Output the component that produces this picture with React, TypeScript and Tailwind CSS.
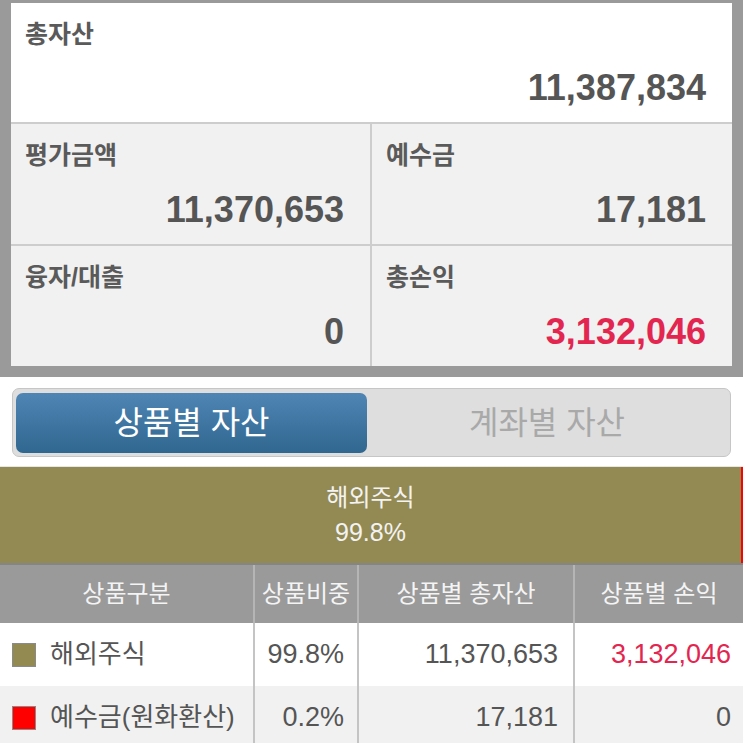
import React from "react";

const FONT = "font-['Liberation_Sans','Noto_Sans_CJK_KR',sans-serif]";

function Cell({
  label,
  value,
  red,
  white,
  border,
  divider,
}: {
  label: string;
  value: string;
  red?: boolean;
  white?: boolean;
  border?: boolean;
  divider?: boolean;
}) {
  return (
    <div
      className={`flex flex-col justify-between pt-[16px] pb-[14px] pl-[14px] pr-[26px] ${
        white ? "bg-white h-[119px]" : "bg-[#f1f1f1] h-[122px]"
      } ${border ? "border-t-2 border-[#cdcdcd]" : ""} ${
        divider ? "border-r-2 border-r-[#cdcdcd]" : ""
      }`}
    >
      <div className="text-[25px] leading-[30px] font-bold text-[#5a5a5a]">{label}</div>
      <div
        className={`text-right text-[36px] leading-[40px] font-bold ${
          red ? "text-[#e3264f]" : "text-[#555555]"
        }`}
      >
        {value}
      </div>
    </div>
  );
}

export default function App() {
  const rows = [
    {
      color: "bg-[#938a52]",
      name: "해외주식",
      ratio: "99.8%",
      total: "11,370,653",
      pl: "3,132,046",
      red: true,
      bg: "bg-white",
    },
    {
      color: "bg-[#ff0000]",
      name: "예수금(원화환산)",
      ratio: "0.2%",
      total: "17,181",
      pl: "0",
      red: false,
      bg: "bg-[#f1f1f1]",
    },
  ];
  return (
    <div className={`w-[743px] h-[743px] overflow-hidden bg-white ${FONT}`}>
      {/* Summary */}
      <div className="bg-[#9a9a9a] pt-[3px] px-[11px] pb-[11px]">
        <Cell label="총자산" value="11,387,834" white />
        <div className="grid grid-cols-[361px_360px]">
          <Cell label="평가금액" value="11,370,653" border divider />
          <Cell label="예수금" value="17,181" border />
          <Cell label="융자/대출" value="0" border divider />
          <Cell label="총손익" value="3,132,046" border red />
        </div>
      </div>

      {/* Tabs */}
      <div className="bg-white pt-[11px] pb-[9px] px-[12px] border-b border-[#e6e6e6]">
        <div className="flex rounded-[7px] border border-[#c6c6c6] bg-[#dedede] pt-[4px] pb-[3px] pl-[3px] pr-[3px] h-[69px]">
          <div className="w-[351px] h-[60px] rounded-[7px] bg-gradient-to-b from-[#4e85b4] to-[#306790] flex items-center justify-center text-white text-[32px] font-normal">
            상품별 자산
          </div>
          <div className="flex-1 flex items-center justify-center text-[#a9a9a9] text-[32px] font-normal">
            계좌별 자산
          </div>
        </div>
      </div>

      {/* Bar */}
      <div className="flex h-[96px]">
        <div className="flex-1 bg-[#938a53] flex flex-col items-center justify-center text-[#f3f3f3]">
          <div className="leading-[35px] text-[24px]">해외주식</div>
          <div className="leading-[35px] text-[25px]">99.8%</div>
        </div>
        <div className="w-[2px] bg-[#ff0000]" />
      </div>

      {/* Table */}
      <div className="grid grid-cols-[253px_104px_216px_170px] h-[60px] bg-[#9a9a9a] border-t-2 border-[#858585] text-[24px] text-[#f4f4f4]">
        <div className="flex items-center justify-center">상품구분</div>
        <div className="flex items-center justify-center border-l-2 border-[#b5b5b5] whitespace-nowrap">상품비중</div>
        <div className="flex items-center justify-center border-l-2 border-[#b5b5b5]">상품별 총자산</div>
        <div className="flex items-center justify-center border-l-2 border-[#b5b5b5]">상품별 손익</div>
      </div>
      {rows.map((r) => (
        <div
          key={r.name}
          className={`grid grid-cols-[253px_104px_216px_170px] h-[63px] ${r.bg} text-[#555555]`}
        >
          <div className="flex items-center pl-[12px] gap-[14px] whitespace-nowrap">
            <div className={`w-[24px] h-[24px] shrink-0 ${r.color} border border-[#8a8a8a]`} />
            <span className="text-[26px]">{r.name}</span>
          </div>
          <div className="flex items-center justify-end pr-[13px] border-l-2 border-[#c4c4c4] text-[27px]">
            {r.ratio}
          </div>
          <div className="flex items-center justify-end pr-[15px] border-l-2 border-[#c4c4c4] text-[27px]">
            {r.total}
          </div>
          <div
            className={`flex items-center justify-end pr-[12px] border-l-2 border-[#c4c4c4] text-[27px] ${
              r.red ? "text-[#e3264f]" : ""
            }`}
          >
            {r.pl}
          </div>
        </div>
      ))}
    </div>
  );
}
